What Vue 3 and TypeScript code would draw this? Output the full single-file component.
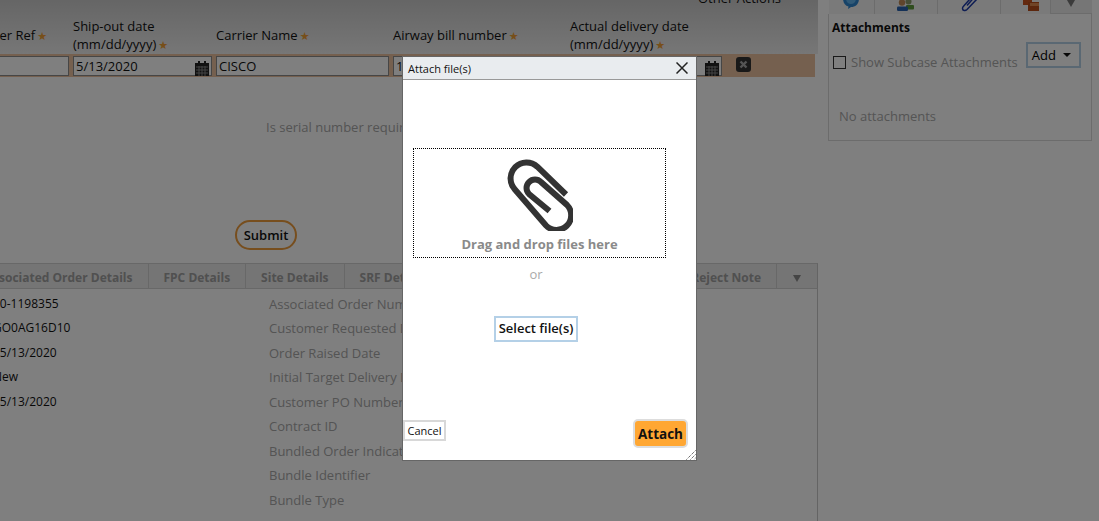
<template>
  <div class="page">
    <div class="main">
      <div class="head">
        <div class="other-actions">Other Actions</div>
        <div class="field-grid labels">
          <div class="label ref">Order Ref<span class="req">★</span></div>
          <div class="label">Ship-out date<br />(mm/dd/yyyy)<span class="req">★</span></div>
          <div class="label">Carrier Name<span class="req">★</span></div>
          <div class="label">Airway bill number<span class="req">★</span></div>
          <div class="label">Actual delivery date<br />(mm/dd/yyyy)<span class="req">★</span></div>
        </div>
      </div>

      <div class="field-grid edit-row">
        <input class="cell" readonly value="" />
        <div class="date-cell">
          <input class="cell" readonly value="5/13/2020" />
          <svg class="cal" viewBox="0 0 14 16"><path d="M0 3h3V1h2v2h4V1h2v2h3v13H0z" fill="#222" /><path d="M1 7h12M1 10h12M1 13h12M4 6v10M7 6v10M10 6v10" stroke="#888" stroke-width="1" /></svg>
        </div>
        <input class="cell" readonly value="CISCO" />
        <input class="cell" readonly value="1Z999AA10123456784" />
        <div class="date-cell">
          <input class="cell" readonly value="" />
          <svg class="cal" viewBox="0 0 14 16"><path d="M0 3h3V1h2v2h4V1h2v2h3v13H0z" fill="#222" /><path d="M1 7h12M1 10h12M1 13h12M4 6v10M7 6v10M10 6v10" stroke="#888" stroke-width="1" /></svg>
        </div>
        <svg class="remove" viewBox="0 0 15 15"><rect width="15" height="15" rx="3" fill="#333" /><path d="M4.500 4.500l6 6m0-6l-6 6" stroke="#a9a9a9" stroke-width="2.400" /></svg>
      </div>

      <div class="serial">Is serial number required for this order?</div>
      <div class="submit-wrap"><button class="submit">Submit</button></div>

      <div class="tabs">
        <div v-for="tab in tabs" :key="tab.name" class="tab" :class="tab.cls">{{ tab.name }}</div>
        <div class="tab more"><span class="down"></span></div>
      </div>

      <div class="details">
        <div class="values">
          <div v-for="(v, i) in values" :key="i" class="row">{{ v }}</div>
        </div>
        <div class="names">
          <div v-for="n in names" :key="n" class="row">{{ n }}</div>
        </div>
      </div>
    </div>

    <aside class="side">
      <div class="side-tabs">
        <div class="side-tab">
          <svg class="ico-bubble" width="16" height="9" viewBox="0 0 16 9"><path d="M0 -2h16c0 6-3 9-8 9l-3 2 .5-2.500C2 5.500 0 3 0 -2z" fill="#2f86d0" /><path d="M3 -2h10c0 4-2 6-5 6s-5-2-5-6z" fill="#62b4ee" /></svg>
        </div>
        <div class="side-tab">
          <svg class="ico-people" width="17" height="11" viewBox="0 0 17 11"><rect x="9" y="5" width="8" height="4.500" rx="1" fill="#5f9a3c" /><circle cx="11.500" cy="1.500" r="3" fill="#8a9a6a" /><circle cx="5" cy="2.500" r="3.200" fill="#c08a58" /><rect x="0" y="6.500" width="11" height="4.500" rx="1.200" fill="#2a62ae" /></svg>
        </div>
        <div class="side-tab">
          <svg class="ico-clip" width="17" height="12" viewBox="0 0 17 12"><path d="M16 -1L6 9.500c-1.500 1.500-4.500 1.500-4.500-1 0-1 .5-1.800 1-2.300L9 -1M12.500 -2L6 5.500" fill="none" stroke="#1c3aa8" stroke-width="1.500" /></svg>
        </div>
        <div class="side-tab">
          <svg class="ico-boxes" width="16" height="11" viewBox="0 0 16 11"><rect x="0" y="0" width="9" height="5" fill="#c8531e" /><rect x="5" y="2" width="11" height="9" fill="#b94f1c" /><rect x="7" y="3" width="9" height="3" fill="#e08a50" /></svg>
        </div>
        <div class="side-tab last"><span class="down"></span></div>
      </div>
      <div class="attachments">
        <div class="att-title">Attachments</div>
        <div class="att-controls">
          <label class="show-sub"><span class="check"></span>Show Subcase Attachments</label>
          <button class="add">Add<span class="caret"></span></button>
        </div>
        <div class="no-att">No attachments</div>
      </div>
    </aside>

    <div class="overlay"></div>

    <div class="modal">
      <div class="modal-head">
        <span>Attach file(s)</span>
        <svg class="close" viewBox="0 0 12 12"><path d="M0.500 0.500l11 11m0-11l-11 11" stroke="#222" stroke-width="1.500" /></svg>
      </div>
      <div class="modal-body">
        <div class="dropzone">
          <svg class="clip" viewBox="506 159 66 72">
            <path d="M565 194.500L536.300 166.700A16 16 0 0 0 513.700 189.300L545 225.500A14 14 0 0 0 566 205L540 182A8 8 0 0 0 528 194L548.500 211" fill="none" stroke="#333" stroke-width="6" />
          </svg>
          <div class="drop-text">Drag and drop files here</div>
        </div>
        <div class="or">or</div>
        <button class="select">Select file(s)</button>
      </div>
      <div class="modal-foot">
        <button class="cancel">Cancel</button>
        <button class="attach">Attach</button>
      </div>
      <svg class="grip" viewBox="0 0 10 10"><path d="M9.500 0.500l-9 9M9.500 4.500l-5 5M9.500 8l-1.500 1.500" stroke="#333" stroke-width="1" stroke-dasharray="1 1" /></svg>
    </div>
  </div>
</template>

<script setup lang="ts">
const tabs = [
  { name: 'Associated Order Details', cls: 'assoc' },
  { name: 'FPC Details', cls: '' },
  { name: 'Site Details', cls: '' },
  { name: 'SRF Details', cls: '' },
  { name: 'Shipment Details', cls: 'grow' },
  { name: 'Reject Note', cls: '' }
]

const values = ['20-1198355', 'GO0AG16D10', '05/13/2020', 'New', '05/13/2020']

const names = [
  'Associated Order Number',
  'Customer Requested Date',
  'Order Raised Date',
  'Initial Target Delivery Date',
  'Customer PO Number',
  'Contract ID',
  'Bundled Order Indicator',
  'Bundle Identifier',
  'Bundle Type'
]
</script>

<style>
html,
body {
  margin: 0;
  overflow: hidden;
}
</style>

<style scoped>
.page {
  position: relative;
  width: 1099px;
  height: 521px;
  overflow: hidden;
  display: flex;
  background: #fff;
  font-family: "Open Sans", sans-serif;
  font-size: 13px;
  color: #111;
}

.main {
  flex: none;
  width: 882px;
  margin-left: -64px;
}

.head {
  height: 54px;
  width: 882px;
  background: linear-gradient(#ccc, #eee);
}

.other-actions {
  height: 0;
  margin-left: 762px;
  line-height: 0;
  transform: translateY(-2px);
}

.field-grid {
  display: grid;
  grid-template-columns: 133px 139px 173px 173px 152px 44px;
  column-gap: 4px;
}

.labels {
  height: 37px;
  padding-top: 17px;
  align-items: center;
  line-height: 18px;
}

.label.ref {
  text-align: right;
  padding-right: 22px;
}

.req {
  margin-left: 2px;
  font-family: "DejaVu Sans", sans-serif;
  font-size: 11px;
  color: #ef9f35;
}

.edit-row {
  width: 879px;
  height: 20px;
  padding: 2px 0 1px;
  background: #ebc09f;
}

.cell {
  display: block;
  width: 100%;
  height: 20px;
  box-sizing: border-box;
  border: 1px solid #8c8c8c;
  padding: 0 2px;
  margin: 0;
  background: #fff;
  font: 13px "Open Sans", sans-serif;
  color: #111;
  outline: none;
}

.date-cell {
  position: relative;
}

.cal {
  position: absolute;
  right: 3px;
  top: 4px;
  width: 14px;
  height: 16px;
}

.remove {
  width: 15px;
  height: 15px;
  margin: 1px 0 0 10px;
}

.serial {
  margin-top: 41px;
  padding-left: 330px;
  line-height: 18px;
  color: #a8a8a8;
  white-space: nowrap;
}

.submit-wrap {
  margin-top: 84px;
  padding-left: 299px;
  height: 30px;
}

.submit {
  width: 62px;
  height: 30px;
  padding: 0;
  border: 2px solid #ee9c3c;
  border-radius: 15px;
  background: #fff;
  font: 600 13px "Open Sans", sans-serif;
  color: #111;
}

.tabs {
  display: flex;
  height: 26px;
  margin-top: 13px;
  width: 882px;
  box-sizing: border-box;
  background: #eaeaea;
  border-top: 1px solid #d0d0d0;
  border-bottom: 1px solid #d0d0d0;
  border-right: 1px solid #c8c8c8;
}

.tab {
  flex: none;
  padding: 1px 15px 0;
  line-height: 25px;
  font-size: 12px;
  font-weight: 700;
  color: #a0a0a0;
  white-space: nowrap;
  border-right: 1px solid #d0d0d0;
}

.tab.assoc {
  box-sizing: border-box;
  width: 212.500px;
  text-align: right;
}

.tab.grow {
  flex: 1;
}

.tab.more {
  width: 40px;
  box-sizing: border-box;
  padding: 0;
  border-right: 0;
  display: flex;
  align-items: center;
  justify-content: center;
}

.down {
  display: block;
  width: 0;
  height: 0;
  border-left: 4px solid transparent;
  border-right: 4px solid transparent;
  border-top: 7px solid #8a8a8a;
  margin-top: 4px;
}

.details {
  display: flex;
  width: 882px;
  height: 232px;
  box-sizing: border-box;
  padding-top: 2.500px;
  border-right: 1px solid #c8c8c8;
}

.values {
  width: 333px;
  padding-left: 57px;
  box-sizing: border-box;
}

.names {
  color: #a8a8a8;
}

.row {
  height: 24.500px;
  line-height: 24px;
  white-space: nowrap;
}

.values .row {
  font-size: 12px;
  color: #111;
}

.side {
  flex: none;
  width: 264px;
  margin-left: 10px;
}

.side-tabs {
  display: flex;
  height: 14px;
  padding-left: 1px;
}

.side-tab {
  flex: none;
  width: 63px;
  height: 14px;
  box-sizing: border-box;
  background: #f4f4f4;
  border-right: 1px solid #d8d8d8;
}

.side-tab svg {
  display: block;
}

.side-tab:first-child {
  width: 46px;
}

.side-tab:nth-child(4) {
  width: 50px;
}

.ico-bubble {
  margin-left: 14px;
}

.ico-people {
  margin-left: 22px;
}

.ico-clip {
  margin-left: 23px;
}

.ico-boxes {
  margin-left: 22px;
}

.side-tab.last {
  flex: 1;
  background: #ececec;
  border-right: 0;
  border-bottom: 1px solid #d8d8d8;
}

.side-tab.last .down {
  margin: 0 0 0 16px;
  border-top-color: #777;
}

.attachments {
  height: 127px;
  box-sizing: border-box;
  border: 1px solid #d8d8d8;
  border-top: 0;
  padding: 5px 3px 0;
}

.att-title {
  font-weight: 700;
  font-size: 12px;
  line-height: 18px;
  color: #111;
}

.att-controls {
  display: flex;
  align-items: flex-start;
  margin-top: 5px;
}

.show-sub {
  display: flex;
  align-items: center;
  margin-top: 13px;
  line-height: 14px;
  color: #aaa;
}

.check {
  width: 11px;
  height: 11px;
  border: 1px solid #333;
  margin: 0 5px 0 1px;
}

.add {
  margin-left: 8px;
  width: 55px;
  height: 26px;
  padding: 0 0 0 4px;
  text-align: left;
  border: 2px solid #b4d0e7;
  background: #fff;
  font: 500 13px "Open Sans", sans-serif;
  color: #000;
}

.caret {
  display: inline-block;
  width: 0;
  height: 0;
  margin-left: 7px;
  vertical-align: 3px;
  border-left: 4px solid transparent;
  border-right: 4px solid transparent;
  border-top: 4px solid #111;
}

.no-att {
  margin: 38px 0 0 7px;
  line-height: 18px;
  color: #aaa;
}

.overlay {
  position: absolute;
  inset: 0;
  background: rgba(0, 0, 0, 0.5);
}

.modal {
  position: absolute;
  left: 403px;
  top: 57px;
  width: 293px;
  height: 403px;
  display: flex;
  flex-direction: column;
  background: #fff;
  box-shadow: 0 0 0 1px #666;
}

.modal-head {
  display: flex;
  justify-content: space-between;
  align-items: center;
  flex: none;
  height: 22px;
  padding: 0 8px 0 5px;
  background: #e9ecef;
  border-bottom: 1px solid #999;
  font-size: 11px;
  color: #111;
}

.close {
  width: 12px;
  height: 12px;
}

.modal-body {
  flex: 1;
  display: flex;
  flex-direction: column;
  padding-left: 10px;
}

.dropzone {
  display: flex;
  flex-direction: column;
  align-items: center;
  box-sizing: border-box;
  width: 253px;
  height: 110px;
  margin-top: 68px;
  padding-top: 10px;
  border: 1px dotted #000;
}

.clip {
  flex: none;
  width: 66px;
  height: 72px;
}

.drop-text {
  margin-top: 4px;
  line-height: 18px;
  font-weight: 700;
  color: #8a8a8a;
}

.or {
  width: 246px;
  margin-top: 7px;
  line-height: 18px;
  text-align: center;
  color: #aaa;
}

.select {
  align-self: flex-start;
  width: 84px;
  height: 26px;
  margin: 33px 0 0 81px;
  padding: 0 0 2px;
  border: 2px solid #b4d0e7;
  background: #fff;
  font: 600 13px "Open Sans", sans-serif;
  color: #111;
}

.modal-foot {
  display: flex;
  justify-content: space-between;
  align-items: flex-start;
  flex: none;
  padding: 0 9px 13px 0;
}

.cancel {
  width: 43px;
  height: 21px;
  padding: 0;
  border: 2px solid #d8d8d8;
  background: #fff;
  font: 11px "Open Sans", sans-serif;
  color: #111;
}

.attach {
  width: 53px;
  height: 27px;
  padding: 0;
  box-sizing: border-box;
  border: 0;
  border-radius: 4px;
  outline: 2px solid #ddd;
  outline-offset: -1px;
  background: #ffa733;
  font: 700 13.500px "Open Sans", sans-serif;
  color: #111;
}

.grip {
  position: absolute;
  right: 0;
  bottom: 0;
  width: 10px;
  height: 10px;
}
</style>
